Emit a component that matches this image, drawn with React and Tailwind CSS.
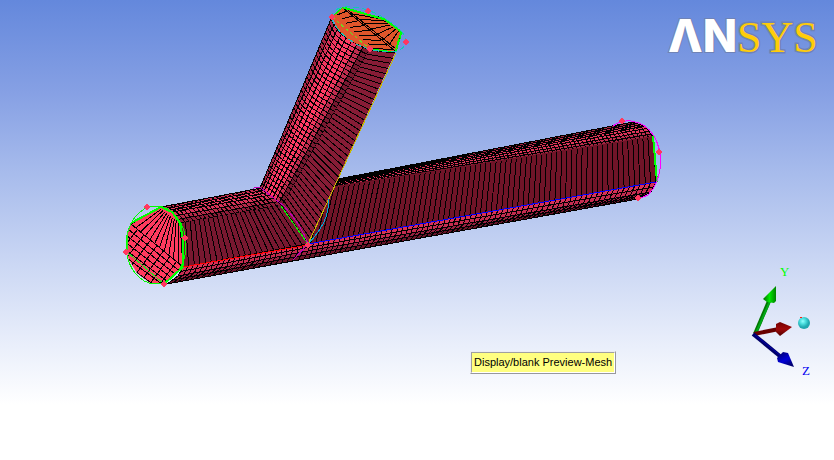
import React from "react";

const lerp = (p, q, t) => [p[0] + (q[0] - p[0]) * t, p[1] + (q[1] - p[1]) * t];

// Point at parameter t on a polyline whose segments count equally.
function along(curve, t) {
  const n = curve.length - 1;
  const k = Math.min(Math.floor(t * n), n - 1);
  return lerp(curve[k], curve[k + 1], t * n - k);
}

const pts = (list) => list.map((p) => p.map((v) => v.toFixed(1)).join(",")).join(" ");

// A ruled surface between two section curves, filled in shaded bands.
function Patch({ from, to, rungs, fills, ease = 1 }) {
  const n = fills.length;
  const bands = fills.map((fill, i) => {
    const a = i / n;
    const b = (i + 1) / n;
    return (
      <polygon
        key={"b" + i}
        fill={fill}
        points={pts([along(from, a), along(to, a), along(to, b), along(from, b)])}
      />
    );
  });
  let d = "";
  for (let i = 0; i <= n && n > 1; i++) {
    d += "M" + pts([along(from, i / n)]) + "L" + pts([along(to, i / n)]);
  }
  for (let j = 0; j <= rungs; j++) {
    const row = [];
    const steps = Math.max(from.length, to.length) * 2;
    for (let i = 0; i <= steps; i++) {
      row.push(lerp(along(from, i / steps), along(to, i / steps), Math.pow(j / rungs, ease)));
    }
    d += "M" + pts(row);
  }
  return (
    <g>
      {bands}
      <path d={d} fill="none" stroke="#000" />
    </g>
  );
}

function fan(a, b, c, e, n) {
  let d = "";
  for (let i = 0; i <= n; i++) d += "M" + pts([lerp(a, b, i / n)]) + "L" + pts([lerp(c, e, i / n)]);
  return d;
}

const nodes = [
  [147, 207], [185, 238], [164, 284], [126, 252], [332, 17], [368, 11],
  [406, 42], [370, 49], [622, 121], [659, 152], [638, 198], [308, 245],
];

function Mesh() {
  return (
    <svg
      viewBox="0 0 834 460"
      className="block w-full"
      shapeRendering="crispEdges"
      role="img"
      aria-label="Pipe junction mesh"
    >
      <defs>
        <clipPath id="run">
          <polygon points="308,244 335,186 653,136 657,182" />
        </clipPath>
        <clipPath id="inlet">
          <polygon points="131,223 161,207 172,212 180,223 184,240 183,267 164,284 150,283 137,273 129,260 126,248 127,235" />
        </clipPath>
      </defs>

      <Patch
        from={[[338, 179], [337, 183], [335, 188]]}
        to={[[633, 122], [646, 127], [653, 137]]}
        rungs={86}
        ease={1.15}
        fills={["#a02440", "#b82a4a", "#e0345a", "#e0345a", "#e0345a", "#c02c4e", "#a02440"]}
      />
      <polygon fill="#000" points="338,179 470,154 440,162 337,183" />
      <g clipPath="url(#run)">
        <polygon fill="#701428" points="308,244 335,186 653,136 657,182" />
        <path d={fan([324, 189], [653, 137], [310, 246], [656, 182], 65)} stroke="#000" />
      </g>
      <Patch
        from={[[308, 244], [307, 251], [304, 259]]}
        to={[[656, 182], [651, 192], [638, 199]]}
        rungs={66}
        fills={["#d83056", "#c42c50", "#982040", "#681428"]}
      />

      <Patch
        from={[[161, 207], [172, 212], [181, 223]]}
        to={[[261, 188], [271, 195], [281, 205]]}
        rungs={24}
        fills={["#c82e52", "#e83860", "#e83860", "#d83258", "#b82a4a", "#8c1c38"]}
      />
      <Patch from={[[181, 223], [183, 267]]} to={[[281, 205], [308, 244]]} rungs={22} fills={["#781830"]} />
      <Patch
        from={[[183, 267], [178, 276], [167, 284]]}
        to={[[308, 244], [308, 251], [304, 259]]}
        rungs={24}
        fills={["#d83056", "#c42c50", "#982040", "#681428"]}
      />

      <Patch
        from={[[331, 19], [337, 30], [346, 38], [357, 44], [369, 50]]}
        to={[[260, 188], [264, 191], [270, 195], [276, 200], [282, 206]]}
        rungs={38}
        fills={["#a82444", "#d43056", "#f0365e", "#ff3a64", "#ff3a64", "#f0365e", "#c02c4e", "#781830"]}
      />
      <Patch from={[[369, 50], [395, 53]]} to={[[282, 206], [308, 244]]} rungs={37} fills={["#861c36"]} />

      <polygon fill="#e0562b" points="343,7 385,19 402,31 396,52 370,49 350,41 338,30 332,17" />
      <path
        stroke="#000"
        fill="none"
        d={
          fan([343, 8], [395, 51], [383, 18], [402, 31], 8) +
          fan([347, 11], [393, 50], [337, 15], [372, 48], 8) +
          "M343,8L395,51M344,7L396,49"
        }
      />
      <path d="M343,7L385,19L402,32L396,52L370,49M343,7L332,17" fill="none" stroke="#00ff00" />
      <path d="M343,8L385,20L401,32L395,51" fill="none" stroke="#00ff00" />
      <path d="M332,17L370,49" stroke="#60e820" strokeDasharray="3 3" />
      <path
        d="M331,18Q333,8 345,7Q365,6 384,18Q407,32 406,42Q404,52 389,52Q374,52 358,45Q338,34 331,18Z"
        fill="none"
        stroke="#10c8b8"
        strokeDasharray="6 3"
      />

      <g clipPath="url(#inlet)">
        <rect x="124" y="205" width="64" height="82" fill="#ff3a5e" />
        <path
          fill="none"
          stroke="#000"
          d={
            fan([159, 208], [180, 223], [131, 224], [183, 267], 11) +
            fan([131, 224], [122, 262], [183, 267], [164, 292], 6) +
            fan([131, 224], [183, 267], [108, 254], [160, 299], 8)
          }
        />
      </g>
      <ellipse cx="156" cy="245" rx="30" ry="39" fill="none" stroke="#00ff00" />
      <path d="M131,223L161,207L172,212L180,223L183,240V267L164,284" fill="none" stroke="#00ff00" strokeWidth="2" />
      <path d="M131,223L127,235V252L164,284" fill="none" stroke="#20e820" />

      <path d="M183,267L308,245" stroke="#ff0000" />
      <path d="M308,244L656,182" stroke="#0000ff" />
      <path d="M396,53L308,244" stroke="#c8b800" />
      <path d="M281,206L308,244" stroke="#00ff00" />
      <path d="M253,189Q256,186 261,188L284,206Q302,226 308,244L293,260" fill="none" stroke="#c000b8" />
      <path d="M328,199Q331,220 308,244" fill="none" stroke="#00a8d8" />
      <path d="M653,136L657,182" stroke="#00ff00" strokeWidth="2" />
      <path
        d="M613,126Q620,120 631,121Q646,123 654,136Q661,149 661,163Q659,184 648,195L638,199"
        fill="none"
        stroke="#ff00ff"
      />
      {nodes.map(([x, y]) => (
        <circle key={x + "-" + y} cx={x} cy={y} r="2.7" fill="#ff3860" />
      ))}
    </svg>
  );
}

function Logo() {
  return (
    <svg
      className="absolute right-0 top-0 h-[72px] w-[170px]"
      viewBox="0 0 170 72"
      role="img"
      aria-label="ANSYS"
      strokeWidth="2"
      stroke="#7083b5"
      paintOrder="stroke"
    >
      <text x="4" y="52" fontSize="45" fontWeight="800" fill="#fff" className="font-['Inter',sans-serif]">
        ΛN
      </text>
      <text x="73" y="52" fontSize="44" fill="#ffcc0a" className="font-['Liberation_Serif',serif]">
        <tspan stroke="#7083b5" strokeWidth="3">SYS</tspan>
      </text>
    </svg>
  );
}

function Triad() {
  return (
    <svg className="absolute bottom-[80px] right-0 h-[120px] w-[94px]" viewBox="740 260 94 120" role="img" aria-label="Axes">
      <defs>
        <linearGradient id="green">
          <stop offset="0" stopColor="#006800" />
          <stop offset="0.5" stopColor="#00e800" />
          <stop offset="1" stopColor="#008000" />
        </linearGradient>
        <linearGradient id="red" x2="0" y2="1">
          <stop offset="0" stopColor="#700000" />
          <stop offset="0.5" stopColor="#a00808" />
          <stop offset="1" stopColor="#500000" />
        </linearGradient>
        <linearGradient id="blue" x2="0.6" y2="1">
          <stop offset="0" stopColor="#000060" />
          <stop offset="0.6" stopColor="#0000d8" />
          <stop offset="1" stopColor="#000070" />
        </linearGradient>
        <radialGradient id="ball" cx="0.4" cy="0.35">
          <stop offset="0" stopColor="#90ffff" />
          <stop offset="0.5" stopColor="#48dcdc" />
          <stop offset="1" stopColor="#20a8b0" />
        </radialGradient>
      </defs>
      <path d="M755,334L769,301" stroke="#007800" strokeWidth="4" />
      <path d="M756,333L770,301" stroke="#00a818" strokeWidth="2" />
      <path d="M776,286L763,299L767,302L774,303L776,301Z" fill="url(#green)" />
      <path d="M754,334L779,329" stroke="#680000" strokeWidth="4" />
      <path d="M792,327L780,322L776,324V332L780,336Z" fill="url(#red)" />
      <path d="M753,334L781,357" stroke="#000068" strokeWidth="4" />
      <path d="M755,335L781,356" stroke="#0000b0" strokeWidth="1" />
      <path d="M794,367L788,353L783,352L777,358L778,362Z" fill="url(#blue)" />
      <circle cx="804" cy="323" r="6" fill="url(#ball)" />
      <rect x="800" y="317" width="2" height="1" fill="#ff2010" />
      <text x="780" y="276" fontSize="13" fill="#00ff00" className="font-['Liberation_Serif',serif]">Y</text>
      <text x="802" y="375" fontSize="13" fill="#0000f0" className="font-['Liberation_Serif',serif]">Z</text>
    </svg>
  );
}

export default function App() {
  return (
    <main className="relative min-h-screen w-full overflow-hidden bg-[linear-gradient(#6488dc_0%,#86a0e4_20%,#a8bcec_38%,#ccd8f4_58%,#e6ecfa_73%,#ffffff_88%)]">
      <Mesh />
      <Logo />
      <Triad />
      <div
        role="tooltip"
        className="absolute left-[470px] top-[351px] border border-t-[#ececf4] border-l-[#ececf4] border-r-[#98989c] border-b-[#98989c]"
      >
        <div className="whitespace-nowrap border border-t-[#a0a0a0] border-l-[#a0a0a0] border-r-white border-b-white bg-[#ffff80] px-[2px] font-['Liberation_Sans',sans-serif] text-[11px] leading-[19px] text-black">
          Display/blank Preview-Mesh
        </div>
      </div>
    </main>
  );
}
